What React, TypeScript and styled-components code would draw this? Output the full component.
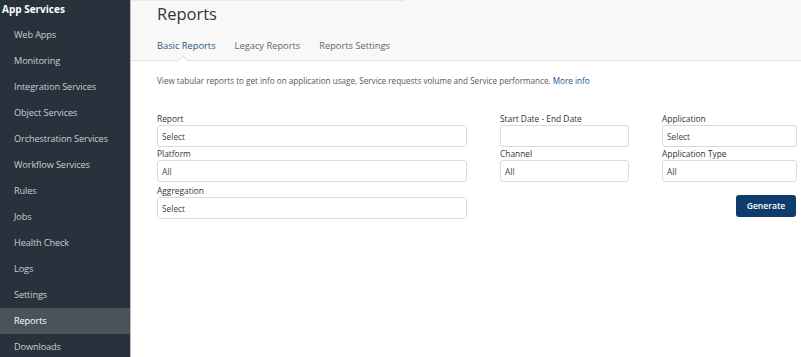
import React from 'react';
import styled, { createGlobalStyle } from 'styled-components';

const GlobalStyle = createGlobalStyle`
    html, body {
        margin: 0;
        padding: 0;
        background: #ffffff;
        font-family: "Open Sans", "Noto Sans", sans-serif;
    }
    * {
        box-sizing: border-box;
    }
`;

const Page = styled.div`
    display: flex;
    height: 357px;
    overflow: hidden;
`;

const Sidebar = styled.nav`
    width: 131px;
    flex-shrink: 0;
    background-color: #27323c;
    border-right: 1px solid #b4b9be;
    display: flex;
    flex-direction: column;
    overflow: hidden;
`;

const SideTitle = styled.div`
    flex-shrink: 0;
    height: 22px;
    line-height: 18px;
    padding-left: 2px;
    font-size: 10px;
    font-weight: 700;
    color: #ffffff;
`;

const SideItem = styled.div<{ $active?: boolean }>`
    flex-shrink: 0;
    height: 26px;
    line-height: 26px;
    padding-left: 14px;
    font-size: 9.2px;
    letter-spacing: -0.12px;
    color: ${props => (props.$active ? '#ffffff' : '#c8cdd2')};
    background-color: ${props => (props.$active ? '#48535c' : 'transparent')};
`;

const Main = styled.main`
    flex: 1;
    display: flex;
    flex-direction: column;
    min-width: 0;
`;

const Header = styled.header`
    height: 61px;
    background-color: #f8f8f8;
    border-bottom: 1px solid #e2e2e2;
    padding-left: 26px;
    display: flex;
    flex-direction: column;
`;

const TopEdge = styled.div`
    width: 273px;
    height: 1px;
    margin-left: -26px;
    background-color: #e8e8e8;
`;

const Title = styled.h1`
    margin: 0;
    height: 29px;
    line-height: 25px;
    font-size: 16.5px;
    font-weight: 400;
    color: #333333;
`;

const Tabs = styled.div`
    display: flex;
    gap: 19px;
    height: 30px;
    align-items: center;
`;

const Tab = styled.div<{ $active?: boolean }>`
    position: relative;
    height: 100%;
    display: flex;
    align-items: center;
    font-size: 9.3px;
    color: ${props => (props.$active ? '#25568a' : '#62666a')};
`;

const Caret = styled.span`
    position: absolute;
    bottom: -5px;
    left: 50%;
    width: 8px;
    height: 8px;
    margin-left: -7px;
    background-color: #ffffff;
    border-top: 1px solid #e2e2e2;
    border-left: 1px solid #e2e2e2;
    transform: rotate(45deg);
`;

const Content = styled.section`
    padding: 13px 26px 0;
`;

const Description = styled.p`
    margin: 0;
    line-height: 13px;
    font-size: 8.15px;
    color: #555a5e;
`;

const Link = styled.a`
    color: #1d4f86;
    text-decoration: none;
`;

const Form = styled.div`
    margin-top: 25px;
    display: grid;
    grid-template-columns: 310px 129px 135px;
    column-gap: 33px;
`;

const Field = styled.div<{ $gapTop?: number }>`
    display: flex;
    flex-direction: column;
    margin-top: ${props => props.$gapTop ?? 0}px;
`;

const Label = styled.label`
    height: 13px;
    line-height: 13px;
    font-size: 8.4px;
    color: #333333;
`;

const Input = styled.div`
    height: 22px;
    border: 1px solid #d9dcdf;
    border-radius: 3px;
    padding-left: 4px;
    display: flex;
    align-items: center;
    font-size: 8.4px;
    color: #444444;
    background: #ffffff;
`;

const Actions = styled.div`
    display: flex;
    justify-content: flex-end;
    align-items: flex-start;
    padding-top: 13px;
`;

const Generate = styled.button`
    width: 60px;
    height: 22px;
    border: none;
    border-radius: 3px;
    background-color: #0e3c6c;
    color: #ffffff;
    font-family: inherit;
    font-size: 8.6px;
    font-weight: 600;
    cursor: pointer;
    margin-right: 1px;
`;

const menu = [
    'Web Apps',
    'Monitoring',
    'Integration Services',
    'Object Services',
    'Orchestration Services',
    'Workflow Services',
    'Rules',
    'Jobs',
    'Health Check',
    'Logs',
    'Settings',
    'Reports',
    'Downloads',
];

const tabs = ['Basic Reports', 'Legacy Reports', 'Reports Settings'];

const App: React.FC = () => {
    return (
        <Page>
            <GlobalStyle />
            <Sidebar>
                <SideTitle>App Services</SideTitle>
                {menu.map(item => (
                    <SideItem key={item} $active={item === 'Reports'}>
                        {item}
                    </SideItem>
                ))}
            </Sidebar>
            <Main>
                <Header>
                    <TopEdge />
                    <Title>Reports</Title>
                    <Tabs>
                        {tabs.map((tab, i) => (
                            <Tab key={tab} $active={i === 0}>
                                {tab}
                                {i === 0 && <Caret />}
                            </Tab>
                        ))}
                    </Tabs>
                </Header>
                <Content>
                    <Description>
                        View tabular reports to get info on application usage, Service requests volume and Service
                        performance. <Link href="#">More info</Link>
                    </Description>
                    <Form>
                        <Field>
                            <Label>Report</Label>
                            <Input>Select</Input>
                        </Field>
                        <Field>
                            <Label>Start Date - End Date</Label>
                            <Input />
                        </Field>
                        <Field>
                            <Label>Application</Label>
                            <Input>Select</Input>
                        </Field>
                        <Field>
                            <Label>Platform</Label>
                            <Input>All</Input>
                        </Field>
                        <Field>
                            <Label>Channel</Label>
                            <Input>All</Input>
                        </Field>
                        <Field>
                            <Label>Application Type</Label>
                            <Input>All</Input>
                        </Field>
                        <Field $gapTop={2}>
                            <Label>Aggregation</Label>
                            <Input>Select</Input>
                        </Field>
                        <div />
                        <Actions>
                            <Generate>Generate</Generate>
                        </Actions>
                    </Form>
                </Content>
            </Main>
        </Page>
    );
};

export default App;
